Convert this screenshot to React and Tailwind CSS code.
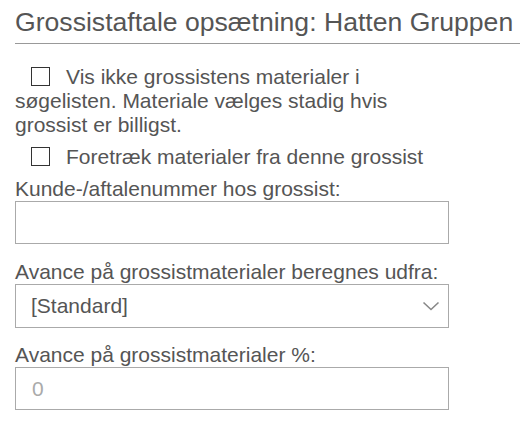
export default function App() {
  const font = { fontFamily: '"Liberation Sans", Arial, sans-serif' };
  return (
    <div className="bg-white w-[520px] h-[438px] pl-[15px] text-[#555]" style={font}>
      <h1 className="pt-[8px] pb-[7px] text-[26.6px] leading-[28px] font-normal border-b border-[#999]">
        Grossistaftale opsætning: Hatten Gruppen
      </h1>
      <div className="w-[434px] text-[21px] leading-[24px]">
        <p className="mt-[21px]">
          <span className="inline-block align-[-2px] ml-[16px] mr-[16px] w-[19px] h-[19px] border border-[#333] bg-white"></span>
          Vis ikke grossistens materialer i søgelisten. Materiale vælges stadig hvis grossist er billigst.
        </p>
        <p className="mt-[8px]">
          <span className="inline-block align-[-2px] ml-[16px] mr-[16px] w-[19px] h-[19px] border border-[#333] bg-white"></span>
          Foretræk materialer fra denne grossist
        </p>
        <label className="block mt-[8px]">Kunde-/aftalenummer hos grossist:</label>
        <div className="h-[43px] border border-[#aaa]"></div>
        <label className="block mt-[16px]">Avance på grossistmaterialer beregnes udfra:</label>
        <div className="h-[44px] border border-[#aaa] flex items-center justify-between pl-[15px] pr-[8px]">
          <span>[Standard]</span>
          <svg width="18" height="10" viewBox="0 0 18 10" fill="none">
            <path d="M1.5 1.5 L9 8.5 L16.5 1.5" stroke="#888" strokeWidth="1.6" />
          </svg>
        </div>
        <label className="block mt-[15px]">Avance på grossistmaterialer %:</label>
        <div className="h-[43px] border border-[#aaa] flex items-center pl-[16px] text-[#aaa]">0</div>
      </div>
    </div>
  );
}
